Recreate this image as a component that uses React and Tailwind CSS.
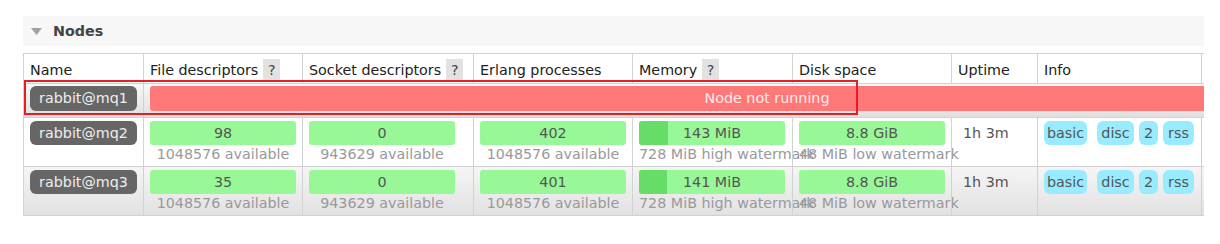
import React from 'react'

const COLS = [120, 159, 171, 159, 160, 159, 86, 165]

const HEADERS = [
  { label: 'Name' },
  { label: 'File descriptors', help: true },
  { label: 'Socket descriptors', help: true },
  { label: 'Erlang processes' },
  { label: 'Memory', help: true },
  { label: 'Disk space' },
  { label: 'Uptime' },
  { label: 'Info' },
]

const NODES = [
  {
    name: 'rabbit@mq2',
    fd: '98', fdAvail: '1048576 available',
    sock: '0', sockAvail: '943629 available',
    proc: '402', procAvail: '1048576 available',
    mem: 143, memLabel: '143 MiB',
    disk: '8.8 GiB',
    uptime: '1h 3m',
    alt: false,
  },
  {
    name: 'rabbit@mq3',
    fd: '35', fdAvail: '1048576 available',
    sock: '0', sockAvail: '943629 available',
    proc: '401', procAvail: '1048576 available',
    mem: 141, memLabel: '141 MiB',
    disk: '8.8 GiB',
    uptime: '1h 3m',
    alt: true,
  },
]

const TAGS = [
  { label: 'basic', cls: 'w-[43px]' },
  { label: 'disc', cls: 'w-[37px] ml-[10px]' },
  { label: '2', cls: 'w-[19px] ml-[5px]' },
  { label: 'rss', cls: 'w-[31px] ml-[5px]' },
]

function Cell({ i, className = '', children }) {
  const last = i === COLS.length - 1
  return (
    <div
      className={`shrink-0 border-l border-[#d2d2d2] pl-[6px] ${last ? 'border-r' : ''} ${className}`}
      style={{ width: COLS[i] }}
    >
      {children}
    </div>
  )
}

function NameBadge({ name, tall }) {
  return (
    <div
      className={`w-[107px] rounded-[6px] bg-[#666] text-center text-[#eee] ${
        tall ? 'h-[25px] leading-[25px]' : 'h-[24px] leading-[24px]'
      }`}
    >
      {name}
    </div>
  )
}

function Stat({ value, sub, fill }) {
  return (
    <div className="w-[146px] text-center whitespace-nowrap">
      <div className="relative h-[24px] overflow-hidden rounded-[3px] bg-[#98f898] leading-[24px] text-[#555]">
        {fill != null && (
          <div className="absolute inset-y-0 left-0 bg-[#66dd66]" style={{ width: fill }} />
        )}
        <span className="relative">{value}</span>
      </div>
      <div className="leading-[19px] text-[#999]">{sub}</div>
    </div>
  )
}

function NodeRow({ node }) {
  const memFill = Math.round((node.mem / 728) * 146)
  return (
    <div
      className={`flex h-[49px] border-t border-[#d2d2d2] ${
        node.alt ? 'bg-linear-to-b from-[#f5f5f5] to-[#e2e2e2]' : 'bg-white'
      }`}
    >
      <Cell i={0} className="pt-[3px]">
        <NameBadge name={node.name} />
      </Cell>
      <Cell i={1} className="pt-[3px]">
        <Stat value={node.fd} sub={node.fdAvail} />
      </Cell>
      <Cell i={2} className="pt-[3px]">
        <Stat value={node.sock} sub={node.sockAvail} />
      </Cell>
      <Cell i={3} className="pt-[3px]">
        <Stat value={node.proc} sub={node.procAvail} />
      </Cell>
      <Cell i={4} className="pt-[3px]">
        <Stat value={node.memLabel} sub="728 MiB high watermark" fill={memFill} />
      </Cell>
      <Cell i={5} className="pt-[3px]">
        <Stat value={node.disk} sub="48 MiB low watermark" />
      </Cell>
      <Cell i={6} className="pt-[3px] !pl-[11px]">
        <div className="leading-[24px] text-[#555]">{node.uptime}</div>
      </Cell>
      <Cell i={7} className="pt-[3px]">
        <div className="flex">
          {TAGS.map((t) => (
            <span
              key={t.label}
              className={`h-[24px] rounded-[6px] bg-[#99ebff] text-center leading-[24px] text-[#555] ${t.cls}`}
            >
              {t.label}
            </span>
          ))}
        </div>
      </Cell>
    </div>
  )
}

export default function App() {
  return (
    <div
      className="relative h-[244px] w-[1220px] bg-white pl-[23px] pt-[16px] text-[14.3px]"
      style={{ fontFamily: '"DejaVu Sans", Verdana, sans-serif' }}
    >
      {/* Section header */}
      <div className="flex h-[30px] w-[1181px] items-center bg-[#f7f7f7]">
        <svg className="ml-[8px] h-[7px] w-[11px]" viewBox="0 0 11 7">
          <path d="M0 0h11L5.5 7z" fill="#a0a0a0" />
        </svg>
        <span className="ml-[11px] font-bold leading-[30px] text-[#444]">Nodes</span>
      </div>

      {/* Nodes table */}
      <div className="mt-[7px] w-[1181px] overflow-hidden">
        <div className="w-max border-b border-[#d2d2d2]">
          {/* Header row */}
          <div className="flex h-[30px] border-t border-[#d2d2d2] bg-white">
            {HEADERS.map((h, i) => (
              <Cell key={h.label} i={i} className="pt-[5px]">
                <div className="flex items-start text-[#222]">
                  <span className="py-[2px] leading-[19px]">{h.label}</span>
                  {h.help && (
                    <span className="ml-[5px] w-[17px] bg-[#e2e2e2] py-[2px] text-center leading-[19px] text-[#444]">
                      ?
                    </span>
                  )}
                </div>
              </Cell>
            ))}
          </div>

          {/* Not running node */}
          <div className="flex h-[34px] border-t border-[#d2d2d2] bg-linear-to-b from-[#f8f8f8] to-[#e0e0e0]">
            <Cell i={0} className="pt-[2px]">
              <NameBadge name="rabbit@mq1" tall />
            </Cell>
            <div className="shrink-0 border-l border-[#d2d2d2] pl-[6px] pt-[2px]">
              <div className="h-[25px] w-[1234px] rounded-[3px] bg-[#ff7878] text-center leading-[25px] text-[#ffeaea]">
                Node not running
              </div>
            </div>
          </div>

          {NODES.map((n) => (
            <NodeRow key={n.name} node={n} />
          ))}
        </div>
      </div>

      {/* Highlight annotation */}
      <div className="pointer-events-none absolute left-[24px] top-[80px] h-[35px] w-[834px] border-[2.5px] border-[#e41e26]" />
    </div>
  )
}
